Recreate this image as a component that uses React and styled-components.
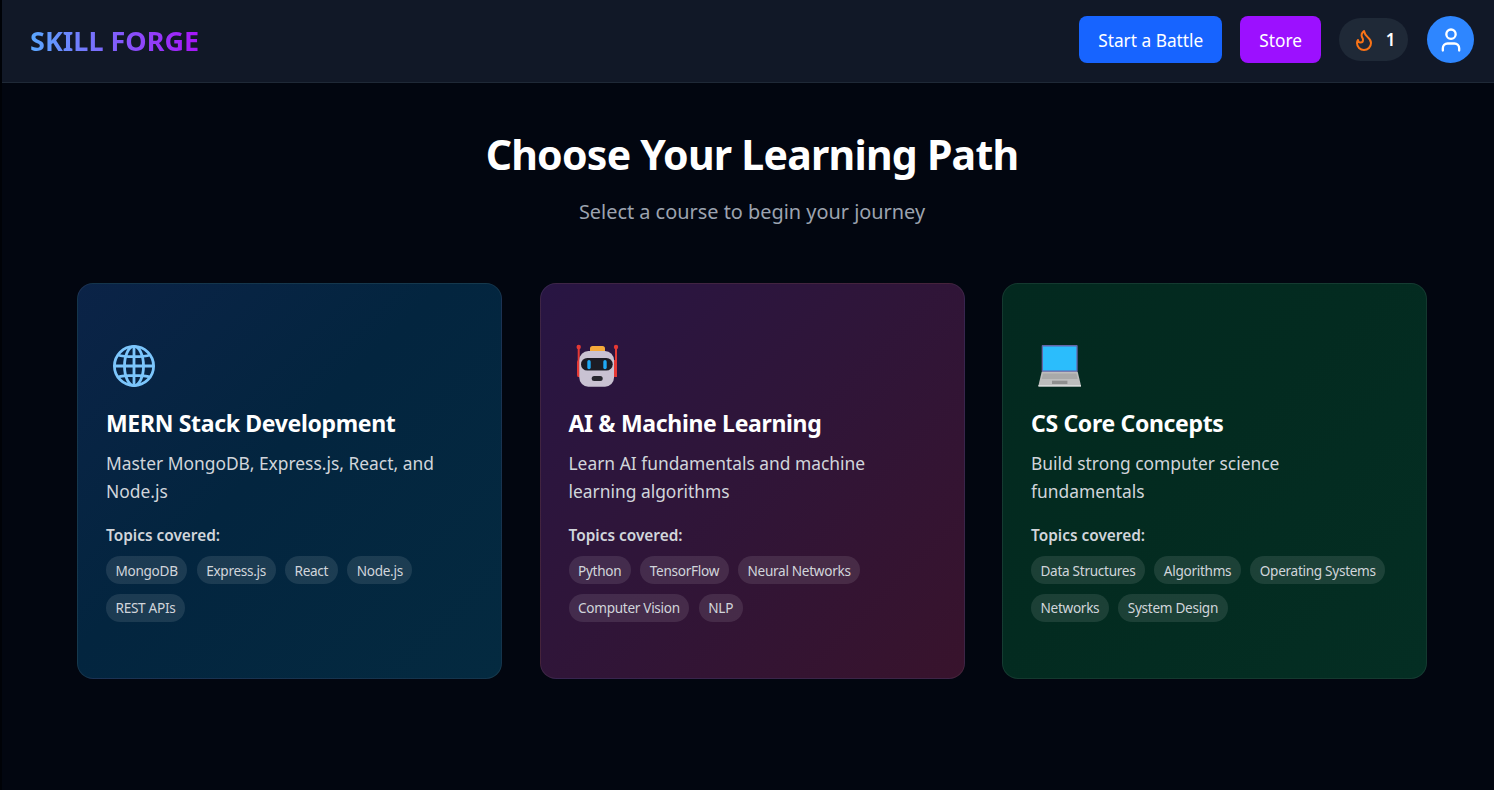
import styled, { createGlobalStyle } from "styled-components";

const courses = [
  {
    id: "mern",
    icon: "globe",
    title: "MERN Stack Development",
    text: "Master MongoDB, Express.js, React, and Node.js",
    topics: ["MongoDB", "Express.js", "React", "Node.js", "REST APIs"],
    from: "#0b2347",
    via: "#03253f",
    to: "#042a40",
  },
  {
    id: "ai",
    icon: "robot",
    title: "AI & Machine Learning",
    text: "Learn AI fundamentals and machine learning algorithms",
    topics: ["Python", "TensorFlow", "Neural Networks", "Computer Vision", "NLP"],
    from: "#281543",
    via: "#2f1539",
    to: "#38132c",
  },
  {
    id: "cs",
    icon: "laptop",
    title: "CS Core Concepts",
    text: "Build strong computer science fundamentals",
    topics: ["Data Structures", "Algorithms", "Operating Systems", "Networks", "System Design"],
    from: "#03291f",
    via: "#032b20",
    to: "#042e23",
  },
];

const GlobalStyle = createGlobalStyle`
  * { box-sizing: border-box; }
  html, body { margin: 0; padding: 0; background: #000207; }
  body { font-family: "Noto Sans", "Open Sans", sans-serif; color: #fff; }
`;

const Page = styled.div`
  min-height: 790px;
  margin-left: 2px;
  background: #020610;
`;

const Header = styled.header`
  height: 83px;
  display: flex;
  align-items: center;
  justify-content: space-between;
  padding: 16px 20px 19px 28px;
  background: #111827;
  border-bottom: 1px solid #1f2937;
`;

const Logo = styled.div`
  margin-top: 2px;
  font-size: 27px;
  font-weight: 700;
  background: linear-gradient(90deg, #5aa8ff, #a815f8);
  -webkit-background-clip: text;
  background-clip: text;
  color: transparent;
`;

const Actions = styled.div`
  display: flex;
  align-items: center;
`;

const ActionButton = styled.button`
  height: 47px;
  padding: 2px 19px 0;
  margin-right: 18px;
  border: 0;
  border-radius: 8px;
  background: ${(p) => p.$bg};
  color: #fff;
  font-family: inherit;
  font-size: 17.3px;
  cursor: pointer;
`;

const Streak = styled.div`
  width: 69px;
  height: 43px;
  margin-right: 19px;
  display: flex;
  align-items: center;
  justify-content: center;
  gap: 10px;
  border-radius: 22px;
  background: #1f2937;
  font-size: 17px;
  font-weight: 600;
`;

const Avatar = styled.div`
  width: 47px;
  height: 47px;
  display: flex;
  align-items: center;
  justify-content: center;
  border-radius: 50%;
  background: #2e86ff;
`;

const Main = styled.main`
  padding: 43px 67px 0 75px;
`;

const Heading = styled.h1`
  margin: 0;
  font-size: 41px;
  line-height: 56px;
  font-weight: 700;
  letter-spacing: -0.76px;
  text-align: center;
`;

const Sub = styled.p`
  margin: 16px 0 0;
  font-size: 19.9px;
  line-height: 28px;
  color: #9ca3af;
  text-align: center;
`;

const CardGrid = styled.div`
  margin-top: 57px;
  display: grid;
  grid-template-columns: repeat(3, 1fr);
  gap: 37.5px;
`;

const Card = styled.article`
  height: 396px;
  padding: 58px 28px 0;
  border: 1px solid rgba(255, 255, 255, 0.07);
  border-radius: 16px;
  background: linear-gradient(135deg, ${(p) => p.$from} 0%, ${(p) => p.$via} 45%, ${(p) => p.$to} 100%);
`;

const IconBox = styled.div`
  height: 48px;
  display: flex;
  align-items: center;
`;

const CardTitle = styled.h2`
  margin: 17px 0 0;
  font-size: 23px;
  line-height: 32px;
  font-weight: 700;
  letter-spacing: -0.33px;
`;

const CardText = styled.p`
  max-width: 350px;
  margin: 10px 0 0;
  font-size: 17.4px;
  line-height: 28px;
  color: #d1d5db;
`;

const TopicsLabel = styled.div`
  margin-top: 19px;
  font-size: 15.4px;
  line-height: 24px;
  font-weight: 600;
  color: #d1d5db;
`;

const Topics = styled.div`
  margin-top: 8px;
  display: flex;
  flex-wrap: wrap;
  gap: 9.5px;
`;

const Topic = styled.span`
  height: 28px;
  display: inline-flex;
  align-items: center;
  padding: 0 9.5px;
  border-radius: 14px;
  background: rgba(255, 255, 255, 0.1);
  font-size: 13.6px;
  letter-spacing: -0.3px;
  color: #d1d5db;
`;

function FlameIcon() {
  return (
    <svg width="24" height="24" viewBox="0 0 24 24" fill="none" stroke="#f97316" strokeWidth="2" strokeLinecap="round" strokeLinejoin="round">
      <path d="M8.5 14.5A2.5 2.5 0 0 0 11 12c0-1.38-.5-2-1-3-1.07-2.14-.22-4.05 2-6 .5 2.5 2 4.9 4 6.5 2 1.6 3 3.5 3 5.5a7 7 0 1 1-14 0c0-1.15.43-2.29 1-3a2.5 2.5 0 0 0 2.5 2.5z" />
    </svg>
  );
}

function UserIcon() {
  return (
    <svg width="28" height="28" viewBox="0 0 24 24" fill="none" stroke="#fff" strokeWidth="2" strokeLinecap="round" strokeLinejoin="round">
      <circle cx="12" cy="7" r="4" />
      <path d="M19 21v-2a4 4 0 0 0-4-4H9a4 4 0 0 0-4 4v2" />
    </svg>
  );
}

function GlobeIcon() {
  return (
    <svg width="52" height="48" viewBox="0 0 52 48" fill="none" stroke="#7cc6fc" strokeWidth="2.8">
      <circle cx="28" cy="24" r="19.6" />
      <ellipse cx="28" cy="24" rx="9.5" ry="19.6" />
      <path d="M28 4.4v39.2M8.4 24h39.2M12 13c6 2.2 26 2.2 32 0M12 35c6-2.2 26-2.2 32 0" />
    </svg>
  );
}

function RobotIcon() {
  return (
    <svg width="52" height="48" viewBox="0 0 52 48">
      <path d="M9.7 5v30M47 5v30" stroke="#e53935" strokeWidth="2" />
      <circle cx="9.7" cy="5" r="2.2" fill="#e53935" />
      <circle cx="47" cy="5" r="2.2" fill="#e53935" />
      <rect x="8" y="18" width="5" height="17" rx="2" fill="#e53935" />
      <rect x="42.5" y="18" width="5" height="17" rx="2" fill="#e53935" />
      <rect x="21" y="4" width="15" height="7" rx="2.5" fill="#f5a93a" />
      <rect x="10.3" y="9" width="34.7" height="35.7" rx="9" fill="#c9c2d2" />
      <rect x="12" y="16" width="31.7" height="12.6" rx="6.3" fill="#1c1c24" />
      <rect x="18.3" y="18" width="3.4" height="9.3" rx="1.7" fill="#1fa9f5" />
      <rect x="34.3" y="18" width="3.4" height="9.3" rx="1.7" fill="#1fa9f5" />
      <rect x="22.7" y="34" width="11" height="5" rx="2.5" fill="#26262e" />
    </svg>
  );
}

function LaptopIcon() {
  return (
    <svg width="52" height="48" viewBox="0 0 52 48">
      <rect x="10.7" y="3" width="36" height="27" rx="1" fill="#6465a8" />
      <rect x="12" y="4.5" width="33.4" height="24" fill="#2bbdfc" />
      <path d="M10.7 29.7h36l3.3 14H7.4z" fill="#bdbdbd" />
      <path d="M12 31.5h33.4l1.3 5.5H10.7z" fill="#a9a9a9" />
      <rect x="21" y="38.7" width="15.4" height="3.3" fill="#8f8f8f" />
      <rect x="7.4" y="43" width="42.6" height="1.7" fill="#dadada" />
    </svg>
  );
}

const icons = { globe: GlobeIcon, robot: RobotIcon, laptop: LaptopIcon };

function CourseCard({ course }) {
  const Icon = icons[course.icon];
  return (
    <Card $from={course.from} $via={course.via} $to={course.to}>
      <IconBox>
        <Icon />
      </IconBox>
      <CardTitle>{course.title}</CardTitle>
      <CardText>{course.text}</CardText>
      <TopicsLabel>Topics covered:</TopicsLabel>
      <Topics>
        {course.topics.map((topic) => (
          <Topic key={topic}>{topic}</Topic>
        ))}
      </Topics>
    </Card>
  );
}

export default function App() {
  return (
    <Page>
      <GlobalStyle />
      <Header>
        <Logo>SKILL FORGE</Logo>
        <Actions>
          <ActionButton $bg="#1764ff">Start a Battle</ActionButton>
          <ActionButton $bg="#9c10ff">Store</ActionButton>
          <Streak>
            <FlameIcon />
            <span>1</span>
          </Streak>
          <Avatar>
            <UserIcon />
          </Avatar>
        </Actions>
      </Header>
      <Main>
        <Heading>Choose Your Learning Path</Heading>
        <Sub>Select a course to begin your journey</Sub>
        <CardGrid>
          {courses.map((course) => (
            <CourseCard key={course.id} course={course} />
          ))}
        </CardGrid>
      </Main>
    </Page>
  );
}
